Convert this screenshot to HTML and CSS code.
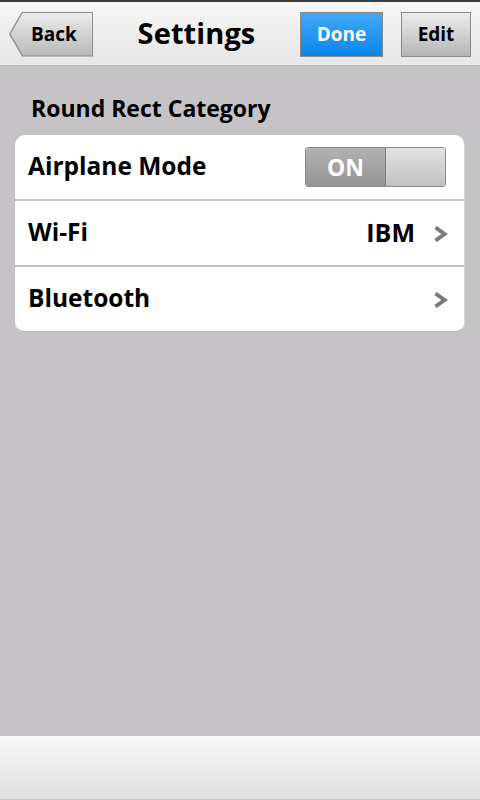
FILE: index.html
```html
<!DOCTYPE html>
<html>
<head>
<meta charset="utf-8">
<link rel="stylesheet" href="styles.css">
</head>
<body>
<div class="screen">
  <header class="header">
    <div class="back"><div class="back-in">Back</div></div>
    <h1 class="title">Settings</h1>
    <div class="btn btn-blue">Done</div>
    <div class="btn btn-grey">Edit</div>
  </header>
  <main class="content">
    <div class="category">Round Rect Category</div>
    <div class="card">
      <div class="row">
        <span class="label">Airplane Mode</span>
        <div class="toggle">
          <div class="toggle-on">ON</div>
          <div class="toggle-knob"></div>
        </div>
      </div>
      <div class="row">
        <span class="label">Wi-Fi</span>
        <span class="value">IBM</span>
        <svg class="chev" width="15" height="16" viewBox="0 0 15 16"><path d="M2.5 1.5 L11.5 8 L2.5 14.5" fill="none" stroke="#7a7a7a" stroke-width="4"/></svg>
      </div>
      <div class="row">
        <span class="label">Bluetooth</span>
        <span class="value"></span>
        <svg class="chev" width="15" height="16" viewBox="0 0 15 16"><path d="M2.5 1.5 L11.5 8 L2.5 14.5" fill="none" stroke="#7a7a7a" stroke-width="4"/></svg>
      </div>
    </div>
  </main>
  <footer class="footer"></footer>
</div>
</body>
</html>
```
FILE: styles.css
```css
* { box-sizing: border-box; }
html, body { margin: 0; padding: 0; }
body {
  font-family: "Open Sans", "DejaVu Sans", sans-serif;
  font-weight: 700;
  color: #000;
  background: #c5c3c6;
}
.screen {
  width: 480px;
  height: 800px;
  display: flex;
  flex-direction: column;
  overflow: hidden;
}
.header {
  height: 66px;
  flex: none;
  border-top: 2px solid #3a3a3a;
  border-bottom: 1px solid #b8b8b8;
  background: linear-gradient(#f6f6f6, #e6e6e6);
  display: flex;
  align-items: center;
  padding: 0 9px 0 9px;
}
.back {
  width: 84px;
  height: 45px;
  padding: 1px;
  background: #8e8e8e;
  clip-path: polygon(13px 0, 100% 0, 100% 100%, 13px 100%, 0 50%);
  margin-top: 1px;
}
.back-in {
  width: 100%;
  height: 100%;
  background: linear-gradient(#ececec, #b8b8b8);
  clip-path: polygon(13px 0, 100% 0, 100% 100%, 13px 100%, 0.5px 50%);
  display: flex;
  align-items: center;
  justify-content: center;
  padding-left: 6px;
  font-size: 19px;
}
.title {
  flex: 1;
  margin: 0;
  text-align: center;
  font-size: 29px;
  font-weight: 700;
  letter-spacing: 0.1px;
  padding-bottom: 2px;
}
.btn {
  height: 45px;
  display: flex;
  align-items: center;
  justify-content: center;
  font-size: 19px;
  border: 1px solid #8a8a8a;
  margin-top: 1px;
}
.btn-blue {
  width: 83px;
  color: #fff;
  background: linear-gradient(#45a8f7, #0786ec);
  margin-right: 18px;
}
.btn-grey {
  width: 70px;
  background: linear-gradient(#ececec, #b6b6b6);
}
.content {
  flex: 1;
  padding: 26px 15px 0 15px;
}
.category {
  font-size: 23px;
  padding-left: 16px;
  line-height: 32px;
  margin-bottom: 11px;
}
.card {
  background: #fff;
  border-radius: 10px;
  border-bottom: 2px solid #bdbdbd;
  border-right: 1px solid #d4d4d4;
  overflow: hidden;
}
.row {
  height: 66px;
  display: flex;
  align-items: center;
  padding: 0 16px 0 13px;
  border-bottom: 2px solid #c4c4c4;
}
.row:last-child { border-bottom: none; height: 64px; }
.label {
  flex: 1;
  font-size: 24.5px;
  padding-bottom: 4px;
}
.value {
  font-size: 25px;
  margin-right: 18px;
  padding-bottom: 2px;
}
.chev { flex: none; margin-top: 2px; }
.toggle {
  width: 141px;
  height: 40px;
  display: flex;
  border: 1px solid #8c8c8c;
  border-radius: 3px;
  overflow: hidden;
  margin-right: 2px;
}
.toggle-on {
  width: 80px;
  background: linear-gradient(#b2b2b2, #949494);
  color: #fff;
  font-size: 23px;
  display: flex;
  align-items: center;
  justify-content: center;
  border-right: 1px solid #7d7d7d;
}
.toggle-knob {
  flex: 1;
  background: linear-gradient(#e2e2e2, #c2c2c2);
}
.footer {
  height: 64px;
  flex: none;
  background: linear-gradient(#f6f7f7, #e0e0e0);
  border-bottom: 1px solid #c8c8c8;
}
```
